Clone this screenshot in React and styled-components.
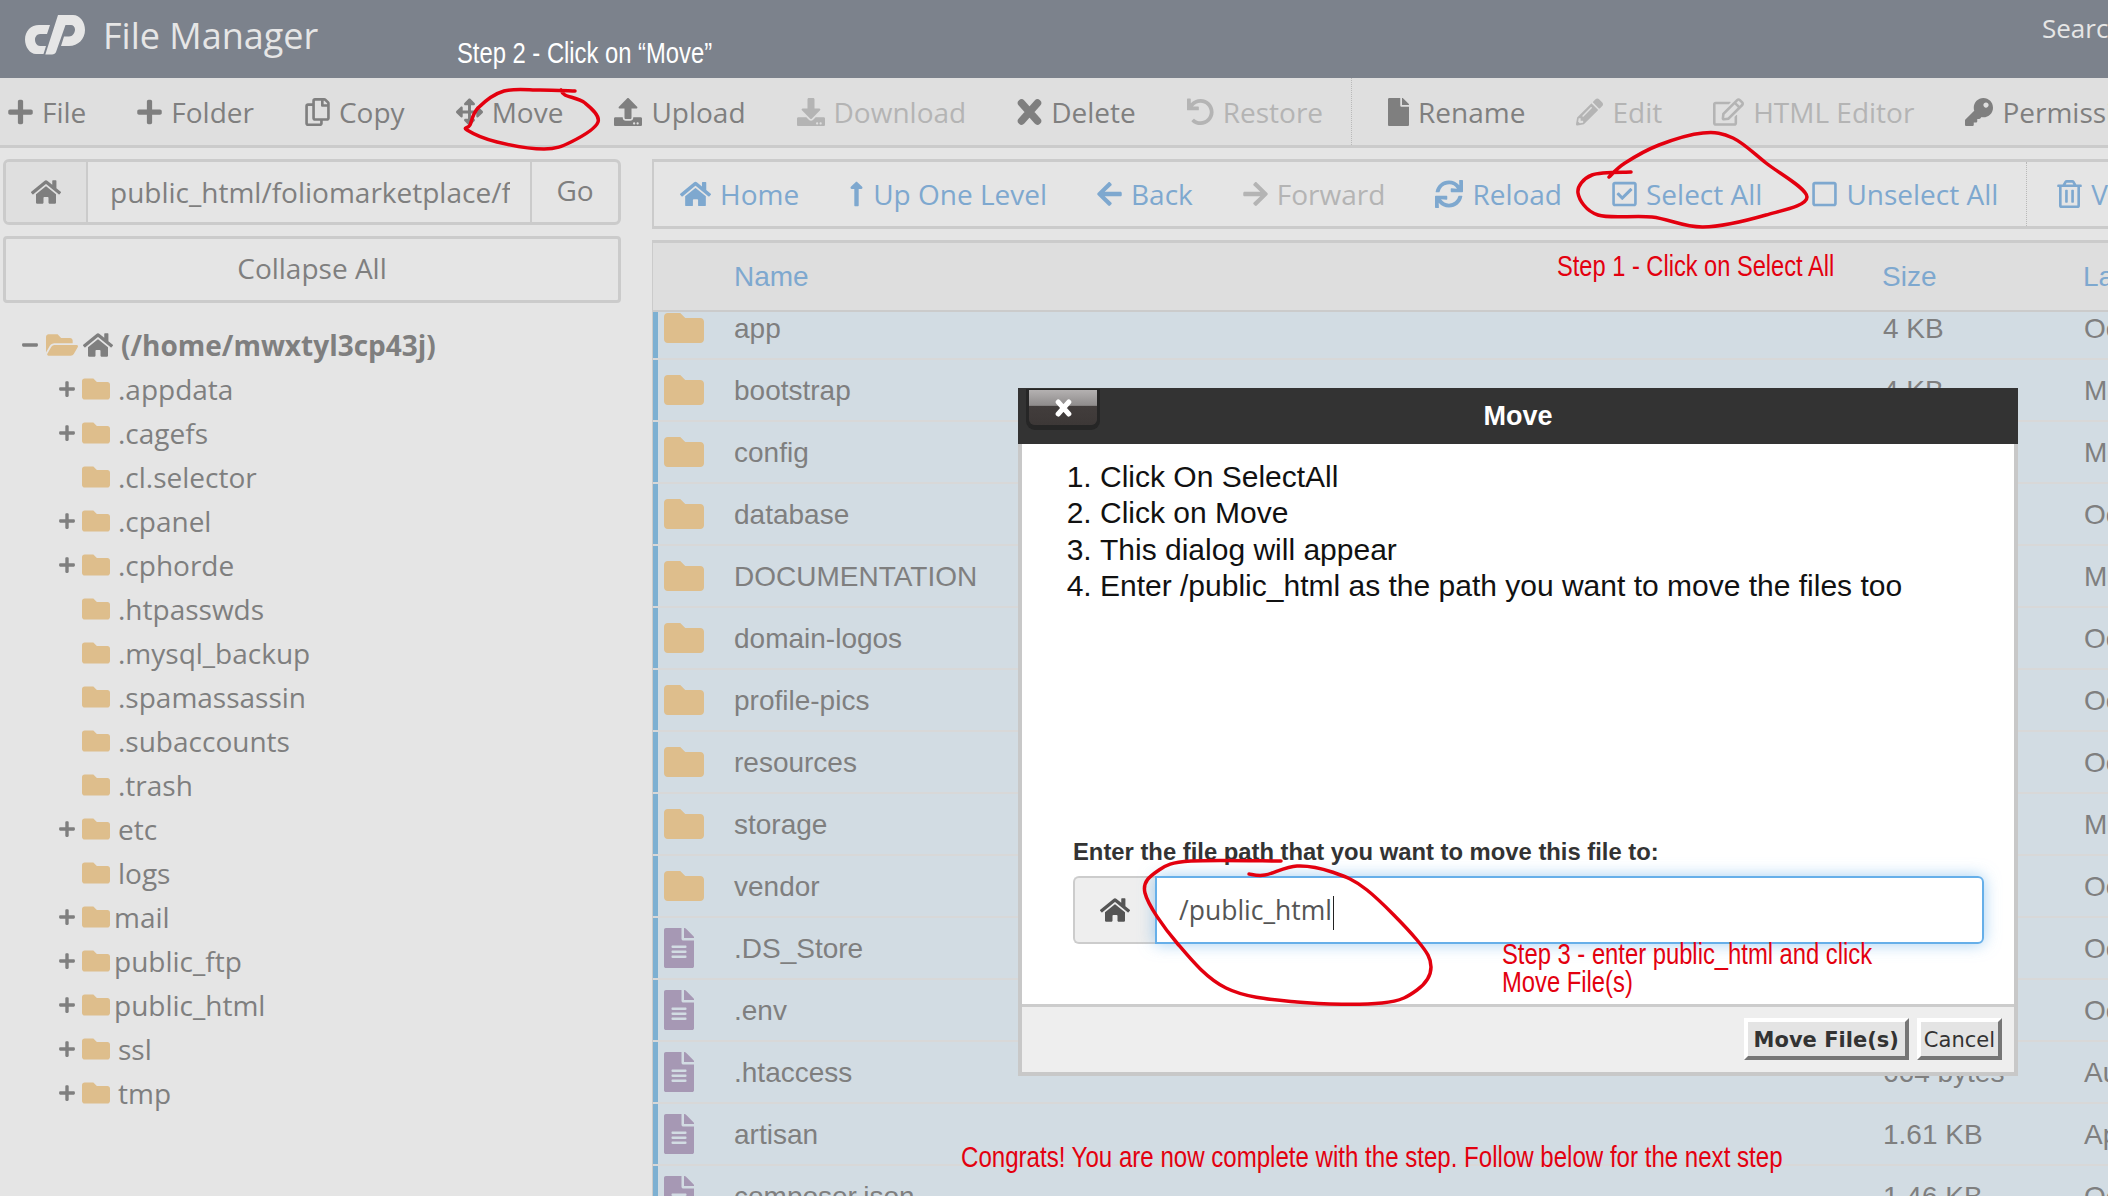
import React from 'react'
import styled, { createGlobalStyle } from 'styled-components'
import {
  FaHome, FaPlus, FaRegCopy, FaArrowsAlt, FaUpload, FaDownload, FaUndo, FaFile, FaPencilAlt,
  FaRegEdit, FaKey, FaLongArrowAltUp, FaArrowLeft, FaArrowRight, FaSync, FaRegCheckSquare, FaRegSquare,
  FaRegTrashAlt, FaFolder, FaFolderOpen, FaFileAlt, FaMinus
} from 'react-icons/fa'

const GlobalStyle = createGlobalStyle`
  html, body { margin: 0; padding: 0; background: #e5e5e5; }
  * { box-sizing: border-box; }
`

const Page = styled.div`
  position: relative;
  width: 2108px;
  height: 1196px;
  overflow: hidden;
  font-family: "Open Sans", sans-serif;
  color: #7f7f7f;
  background: #e5e5e5;
`

const Header = styled.header`
  height: 78px;
  background: #7c828c;
  display: flex;
  align-items: center;
  padding-left: 24px;
  color: #e6e6e6;
  overflow: hidden;
`
const Title = styled.div`
  font-size: 36px;
  margin-left: 17px;
  margin-top: -8px;
`
const Search = styled.div`
  margin-left: auto;
  font-size: 26px;
  margin-top: -22px;
  width: 66px;
  white-space: nowrap;
`

const Sep = styled.span`
  flex: none;
  align-self: stretch;
  margin: 0 -15px 0 -23px;
  border-left: 1px dotted #b9b9b9;
`
const Toolbar = styled.nav`
  display: flex;
  align-items: center;
  gap: 51px;
  height: 70px;
  padding-left: 8px;
  background: #dfdfdf;
  border-bottom: 3px solid #cbcbcb;
  white-space: nowrap;
  font-size: 28px;
  overflow: hidden;
`
const ToolItem = styled.span`
  display: inline-flex;
  align-items: center;
  gap: 9px;
  flex: none;
  color: ${p => p.$off ? '#b4b4b4' : p.$blue ? '#7ea8cf' : '#7f7f7f'};
  svg { width: ${p => p.$w}px; height: 28px; }
`

const Body = styled.div`
  display: grid;
  grid-template-columns: 652px 1fr;
  height: 1048px;
  padding-top: 11px;
`

const Side = styled.aside`
  padding-left: 3px;
`
const PathBar = styled.div`
  display: flex;
  width: 618px;
  height: 66px;
  border: 3px solid #cbcbcb;
  border-radius: 6px;
  overflow: hidden;
`
const PathHome = styled.div`
  flex: 0 0 82px;
  display: flex;
  align-items: center;
  justify-content: center;
  background: #dfdfdf;
  border-right: 2px solid #cbcbcb;
`
const PathText = styled.div`
  flex: 1;
  min-width: 0;
  margin: 0 20px 0 22px;
  font-size: 28px;
  line-height: 60px;
  white-space: nowrap;
  overflow: hidden;
`
const PathGo = styled.div`
  flex: 0 0 88px;
  border-left: 2px solid #cbcbcb;
  text-align: center;
  font-size: 28px;
  line-height: 56px;
`
const Collapse = styled.div`
  width: 618px;
  height: 67px;
  margin-top: 11px;
  border: 3px solid #cbcbcb;
  border-radius: 4px;
  text-align: center;
  font-size: 28px;
  line-height: 58px;
`
const Tree = styled.ul`
  list-style: none;
  margin: 20px 0 0;
  padding: 0;
`
const TreeRow = styled.li`
  display: flex;
  align-items: center;
  height: 44px;
  font-size: 28px;
  padding-left: ${p => p.$root ? 18 : 55}px;
  font-weight: ${p => p.$root ? 700 : 400};
`
const Toggle = styled.span`
  flex: 0 0 ${p => p.$root ? 25 : 24}px;
  display: flex;
  color: #7f7f7f;
`
const TreeLabel = styled.span`
  margin-left: ${p => p.$tight ? 4 : 8}px;
`

const Main = styled.main`
  min-width: 0;
  overflow: hidden;
`
const SubBar = styled(Toolbar)`
  gap: 50px;
  height: 70px;
  padding-left: 26px;
  background: #e5e5e5;
  border-top: 3px solid #cbcbcb;
  border-left: 2px solid #cbcbcb;
  border-bottom: 3px solid #cbcbcb;
  ${Sep} { margin: 0 -20px 0 -22px; }
`
const TableWrap = styled.div`
  margin-top: 11px;
  height: 968px;
  overflow: hidden;
  border-left: 1px solid #cbcbcb;
`
const TableHead = styled.div`
  display: grid;
  grid-template-columns: 81px 1148px 201px 1fr;
  height: 72px;
  align-items: center;
  background: #dedede;
  border-top: 3px solid #cbcbcb;
  border-bottom: 2px solid #cbcbcb;
  font-family: "Liberation Sans", sans-serif;
  font-size: 28px;
  color: #7ea8cf;
  white-space: nowrap;
  position: relative;
  z-index: 1;
  span:first-child { grid-column: 2; }
`
const Rows = styled.div`
  display: flex;
  flex-direction: column;
  gap: 2px;
  margin-top: -14px;
  background: #d8d8d8;
`
const Row = styled.div`
  display: grid;
  grid-template-columns: 76px 1149px 201px 1fr;
  flex: none;
  align-items: center;
  height: 60px;
  padding-top: 2px;
  background: #d2dce3;
  border-left: 5px solid #7db0d2;
  font-family: "Liberation Sans", sans-serif;
  font-size: 28px;
  white-space: nowrap;
  overflow: hidden;
`
const RowIcon = styled.span`
  display: flex;
  margin: -2px 0 0 6px;
  color: ${p => p.$file ? '#a698b4' : '#debe8c'};
  svg { height: 40px; width: ${p => p.$file ? 30 : 40}px; }
`

const Modal = styled.section`
  position: absolute;
  left: 1018px;
  top: 388px;
  width: 1000px;
  height: 688px;
  padding-bottom: 4px;
  display: flex;
  flex-direction: column;
  background: #c8c8c8;
  font-family: "Liberation Sans", sans-serif;
  z-index: 2;
`
const ModalHead = styled.div`
  position: relative;
  flex: 0 0 56px;
  background: #333;
  color: #fff;
  text-align: center;
  font-size: 27px;
  font-weight: 700;
  line-height: 56px;
`
const Close = styled.div`
  position: absolute;
  left: 11px;
  top: 2px;
  width: 68px;
  height: 35px;
  display: flex;
  align-items: center;
  justify-content: center;
  border-radius: 0 0 6px 6px;
  background: linear-gradient(#b4b1b1, #8f8c8c 44%, #423d3c 46%, #3d3837);
  box-shadow: 0 2px 0 3px #262626;
  color: #fff;
`
const CloseX = styled.span`
  display: flex;
  svg { width: 17px; height: 18px; }
`
const ModalBody = styled.div`
  flex: 1;
  margin: 0 4px;
  padding: 15px 30px 60px 44px;
  background: #fff;
  display: flex;
  flex-direction: column;
  justify-content: space-between;
`
const Steps = styled.ol`
  margin: 0;
  padding-left: 34px;
  color: #111;
  font-size: 30px;
  line-height: 36.4px;
`
const MoveForm = styled.div`
  margin-left: 7px;
`
const FieldLabel = styled.div`
  font-size: 23.8px;
  font-weight: 700;
  color: #333;
  margin-bottom: 10px;
`
const Field = styled.div`
  display: flex;
  height: 68px;
`
const FieldHome = styled.div`
  flex: 0 0 82px;
  display: flex;
  align-items: center;
  justify-content: center;
  background: #eee;
  border: 2px solid #ccc;
  border-right: 0;
  border-radius: 6px 0 0 6px;
  color: #555;
`
const FieldInput = styled.div`
  flex: 1;
  padding-left: 22px;
  border: 2px solid #66afe9;
  border-radius: 0 6px 6px 0;
  box-shadow: 0 0 16px rgba(102, 175, 233, .6);
  font-family: "Open Sans", sans-serif;
  font-size: 26.5px;
  line-height: 64px;
  color: #555;
`
const Caret = styled.span`
  display: inline-block;
  width: 1px;
  height: 34px;
  background: #222;
  vertical-align: middle;
  margin-left: 1px;
`
const ModalFoot = styled.div`
  flex: 0 0 68px;
  margin: 0 4px;
  border-top: 3px solid #ccc;
  background: #eee;
  display: flex;
  justify-content: flex-end;
  gap: 8px;
  padding: 11px 12px 0 0;
`
const RaisedBtn = styled.div`
  height: 42px;
  padding: 0 ${p => p.$bold ? 6 : 3}px;
  border: 4px solid;
  border-color: #fff #767676 #767676 #fff;
  background: #e4e4e4;
  color: #333;
  font-family: "DejaVu Sans", sans-serif;
  font-size: 21px;
  font-weight: ${p => p.$bold ? 700 : 400};
  line-height: 37px;
  white-space: nowrap;
`

// hand written annotations on the screenshot, in a narrow marker-ish face
const Note = styled.div`
  position: absolute;
  left: ${p => p.$x}px;
  top: ${p => p.$y}px;
  z-index: 4;
  color: ${p => p.$white ? '#fff' : '#e3000f'};
  font-family: "Liberation Sans", sans-serif;
  font-size: 29px;
  line-height: 28px;
  white-space: nowrap;
  transform: scaleX(${p => p.$sx || .82});
  transform-origin: left top;
`
const Scribbles = styled.svg`
  position: absolute;
  left: 0;
  top: 0;
  z-index: 3;
  pointer-events: none;
`

// catmull-rom through the hand drawn points
const smooth = pts => {
  let d = `M${pts[0][0]} ${pts[0][1]}`
  for (let i = 0; i < pts.length - 1; i++) {
    const a = pts[i - 1] || pts[i], b = pts[i], c = pts[i + 1], e = pts[i + 2] || c
    d += ` C${b[0] + (c[0] - a[0]) / 6} ${b[1] + (c[1] - a[1]) / 6} ${c[0] - (e[0] - b[0]) / 6} ${c[1] - (e[1] - b[1]) / 6} ${c[0]} ${c[1]}`
  }
  return d
}

const moveLoop = [[575, 91], [540, 90], [504, 91], [478, 108], [470, 125], [467, 130], [497, 142], [544, 149], [571, 142], [598, 122], [585, 103], [565, 95], [561, 90]]
const selectLoop = [[1609, 177], [1625, 163], [1659, 145], [1703, 133], [1733, 138], [1766, 163], [1807, 197], [1766, 215], [1703, 227], [1652, 217], [1598, 215], [1578, 193], [1592, 175], [1631, 172]]
const inputLoop = [[1281, 861], [1191, 861], [1159, 870], [1145, 893], [1177, 943], [1226, 988], [1297, 1002], [1382, 1003], [1417, 990], [1431, 967], [1417, 940], [1367, 890], [1332, 872], [1297, 866], [1265, 875], [1249, 874]]

const BoldX = () => (
  <svg viewBox="0 0 25 27" stroke="currentColor" strokeWidth="7.5" strokeLinecap="round">
    <path d="M4.5 4.5 L20.5 22.5 M20.5 4.5 L4.5 22.5" />
  </svg>
)

// icon, label, icon width, greyed out
const mainTools = [
  [FaPlus, 'File', 25], [FaPlus, 'Folder', 25], [FaRegCopy, 'Copy', 25], [FaArrowsAlt, 'Move', 27], [FaUpload, 'Upload', 28],
  [FaDownload, 'Download', 28, true], [BoldX, 'Delete', 25], [FaUndo, 'Restore', 27, true], null,
  [FaFile, 'Rename', 21], [FaPencilAlt, 'Edit', 27, true], [FaRegEdit, 'HTML Editor', 31, true], [FaKey, 'Permissions', 28]
]
const subTools = [
  [FaHome, 'Home', 31], [FaLongArrowAltUp, 'Up One Level', 15], [FaArrowLeft, 'Back', 25], [FaArrowRight, 'Forward', 25, true],
  [FaSync, 'Reload', 28], [FaRegCheckSquare, 'Select All', 25], [FaRegSquare, 'Unselect All', 25], null, [FaRegTrashAlt, 'View Trash', 25]
]
const tree = [
  ['.appdata', 1], ['.cagefs', 1], ['.cl.selector'], ['.cpanel', 1], ['.cphorde', 1], ['.htpasswds'], ['.mysql_backup'],
  ['.spamassassin'], ['.subaccounts'], ['.trash'], ['etc', 1], ['logs'], ['mail', 1, 1], ['public_ftp', 1, 1],
  ['public_html', 1, 1], ['ssl', 1], ['tmp', 1]
]
const files = [
  ['app', '4 KB', 'Oct 5, 2019'], ['bootstrap', '4 KB', 'Mar 3, 2019'], ['config', '4 KB', 'Mar 3, 2019'],
  ['database', '4 KB', 'Oct 5, 2019'], ['DOCUMENTATION', '4 KB', 'Mar 3, 2019'], ['domain-logos', '4 KB', 'Oct 5, 2019'],
  ['profile-pics', '4 KB', 'Oct 5, 2019'], ['resources', '4 KB', 'Oct 5, 2019'], ['storage', '4 KB', 'Mar 3, 2019'],
  ['vendor', '4 KB', 'Oct 5, 2019'], ['.DS_Store', '6 KB', 'Oct 5, 2019', 1], ['.env', '1 KB', 'Oct 5, 2019', 1],
  ['.htaccess', '664 bytes', 'Aug 2, 2019', 1], ['artisan', '1.61 KB', 'Apr 9, 2019', 1], ['composer.json', '1.46 KB', 'Oct 5, 2019', 1]
]

const Logo = () => (
  <svg width="62" height="42" viewBox="23 13 62 42" fill="#e6e6e6" style={{ marginTop: -9 }}>
    <path d="M49 24 L46 33 H39 C36 33 34 36 34 38.5 C34 42 36 45 39 45 H45 L42.5 53 H35 C29 53 24 46 24 38.5 C24 30 30 24 38 24 Z" />
    <path d="M57 14 H72 C79 14 84 21 84 29 C84 38 77 45 68 45 H60 L63 35.5 H68 C71.5 35.5 74 32 74 28.5 C74 26 72 24 70 24 H64.5 L55 51 C54.5 52.5 53 53.5 51 53.5 H44.3 Z" />
  </svg>
)

const tools = (list, blue) => list.map((t, i) => {
  if (!t) return <Sep key={i} />
  const [Icon, label, w, off] = t
  return <ToolItem key={label} $w={w} $off={off} $blue={blue}><Icon />{label}</ToolItem>
})

export default function App() {
  return (
    <Page>
      <GlobalStyle />
      <Header>
        <Logo />
        <Title>File Manager</Title>
        <Search>Search</Search>
      </Header>
      <Toolbar>{tools(mainTools)}</Toolbar>
      <Body>
        <Side>
          <PathBar>
            <PathHome><FaHome size={30} /></PathHome>
            <PathText>public_html/foliomarketplace/files</PathText>
            <PathGo>Go</PathGo>
          </PathBar>
          <Collapse>Collapse All</Collapse>
          <Tree>
            <TreeRow $root>
              <Toggle $root><FaMinus size={18} /></Toggle>
              <FaFolderOpen size={32} color="#debe8c" />
              <FaHome size={30} style={{ marginLeft: 5 }} />
              <TreeLabel $root>(/home/mwxtyl3cp43j)</TreeLabel>
            </TreeRow>
            {tree.map(([name, plus, tight]) => (
              <TreeRow key={name}>
                <Toggle>{plus && <FaPlus size={18} />}</Toggle>
                <FaFolder size={28} color="#debe8c" />
                <TreeLabel $tight={tight}>{name}</TreeLabel>
              </TreeRow>
            ))}
          </Tree>
        </Side>
        <Main>
          <SubBar>{tools(subTools, true)}</SubBar>
          <TableWrap>
            <TableHead>
              <span>Name</span>
              <span>Size</span>
              <span>Last Modified</span>
            </TableHead>
            <Rows>
              {files.map(([name, size, date, file]) => (
                <Row key={name}>
                  <RowIcon $file={file}>{file ? <FaFileAlt /> : <FaFolder />}</RowIcon>
                  <span>{name}</span>
                  <span>{size}</span>
                  <span>{date}</span>
                </Row>
              ))}
            </Rows>
          </TableWrap>
        </Main>
      </Body>

      <Modal>
        <ModalHead>
          <Close><CloseX><BoldX /></CloseX></Close>
          Move
        </ModalHead>
        <ModalBody>
          <Steps>
            <li>Click On SelectAll</li>
            <li>Click on Move</li>
            <li>This dialog will appear</li>
            <li>Enter /public_html as the path you want to move the files too</li>
          </Steps>
          <MoveForm>
            <FieldLabel>Enter the file path that you want to move this file to:</FieldLabel>
            <Field>
              <FieldHome><FaHome size={30} /></FieldHome>
              <FieldInput>/public_html<Caret /></FieldInput>
            </Field>
          </MoveForm>
        </ModalBody>
        <ModalFoot>
          <RaisedBtn $bold>Move File(s)</RaisedBtn>
          <RaisedBtn>Cancel</RaisedBtn>
        </ModalFoot>
      </Modal>

      <Note $white $x={457} $y={39}>Step 2 - Click on “Move”</Note>
      <Note $x={1557} $y={252} $sx={.815}>Step 1 - Click on Select All</Note>
      <Note $x={1502} $y={940}>Step 3 - enter public_html and click<br />Move File(s)</Note>
      <Note $x={961} $y={1143} $sx={.83}>Congrats! You are now complete with the step. Follow below for the next step</Note>

      <Scribbles width="2108" height="1196" fill="none" stroke="#e3000f" strokeWidth="3.5" strokeLinecap="round">
        <path d={smooth(moveLoop)} />
        <path d={smooth(selectLoop)} />
        <path d={smooth(inputLoop)} />
      </Scribbles>
    </Page>
  )
}
